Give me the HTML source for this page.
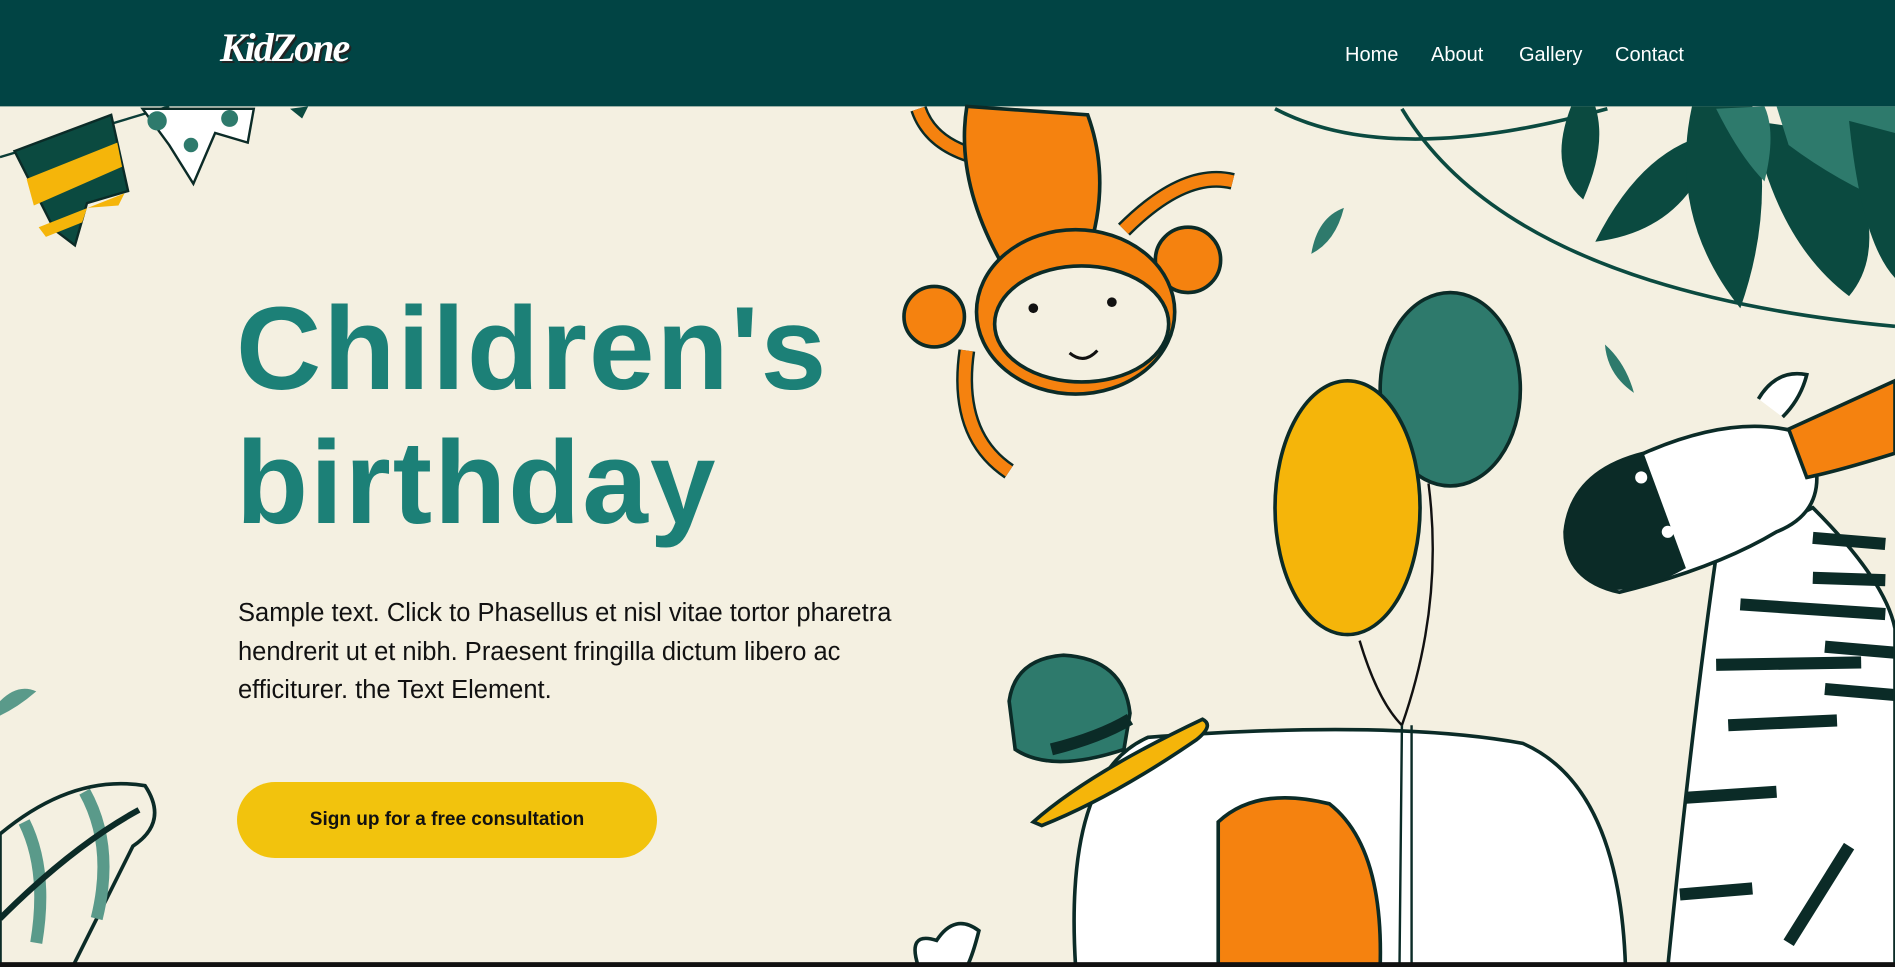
<!DOCTYPE html>
<html><head><meta charset="utf-8"><style>
html,body{margin:0;padding:0}
body{width:1895px;height:967px;overflow:hidden;position:relative;background:#f4f0e1;font-family:"Liberation Sans",sans-serif}
svg.bg{position:absolute;left:0;top:0;width:1895px;height:967px}
.logo{position:absolute;left:220px;top:24px;color:#fff;font-family:"Liberation Serif",serif;font-style:italic;font-weight:bold;font-size:40px;letter-spacing:-2px;text-shadow:2px 2px 0 #222}
nav{position:absolute;top:44px;left:1345px;font-size:20px;color:#fff}
nav span{position:absolute;white-space:nowrap}
h1{position:absolute;left:236px;top:282px;margin:0;font-size:118px;line-height:134px;color:#1c8077;font-weight:bold;letter-spacing:2px}
p{position:absolute;left:238px;top:594px;margin:0;width:675px;font-size:25.5px;line-height:38.5px;color:#111}
.btn{position:absolute;left:237px;top:782px;width:420px;height:76px;border-radius:38px;background:#f2c30d;font-size:19px;font-weight:bold;color:#111;text-align:center;line-height:76px}
</style></head><body>
<svg class="bg" viewBox="0 0 1568 800" preserveAspectRatio="none">
<rect x="0" y="0" width="1568" height="88" fill="#014444"/>
<path d="M0 130 L140 88" stroke="#0b3d37" stroke-width="2" fill="none"/>
<polygon points="12,125 92,95 106,158 72,168 62,203 45,190" fill="#0b4a40" stroke="#0b2b27" stroke-width="2"/>
<path d="M22 148 L97 118 L101 138 L28 170Z" fill="#f5b50a"/>
<path d="M32 188 L103 160 L98 170 L72 172 L68 184 L38 196Z" fill="#f5b50a"/>
<polygon points="118,90 210,90 205,118 178,110 160,152 140,120" fill="#fff" stroke="#0b2b27" stroke-width="2"/>
<circle cx="130" cy="100" r="8" fill="#2e7a6c"/><circle cx="158" cy="120" r="6" fill="#2e7a6c"/><circle cx="190" cy="98" r="7" fill="#2e7a6c"/>
<path d="M240 90 L250 98 L255 88Z" fill="#0b4a40"/>
<path d="M760 90 Q770 120 810 130" stroke="#0b2b27" stroke-width="14" fill="none"/>
<path d="M760 90 Q770 120 810 130" stroke="#f5820f" stroke-width="10" fill="none"/>
<path d="M800 88 Q790 150 830 220 L900 210 Q920 150 900 95 Z" fill="#f5820f" stroke="#0b2b27" stroke-width="3"/>
<path d="M930 190 Q980 140 1020 150" stroke="#0b2b27" stroke-width="14" fill="none"/>
<path d="M930 190 Q980 140 1020 150" stroke="#f5820f" stroke-width="10" fill="none"/>
<path d="M800 290 Q790 360 835 390" stroke="#0b2b27" stroke-width="14" fill="none"/>
<path d="M800 290 Q790 360 835 390" stroke="#f5820f" stroke-width="10" fill="none"/>
<circle cx="773" cy="262" r="25" fill="#f5820f" stroke="#0b2b27" stroke-width="3"/>
<circle cx="983" cy="215" r="27" fill="#f5820f" stroke="#0b2b27" stroke-width="3"/>
<ellipse cx="890" cy="258" rx="82" ry="68" fill="#f5820f" stroke="#0b2b27" stroke-width="3"/>
<ellipse cx="895" cy="268" rx="72" ry="48" fill="#f4f0e1" stroke="#0b2b27" stroke-width="3"/>
<circle cx="855" cy="255" r="4" fill="#111"/><circle cx="920" cy="250" r="4" fill="#111"/>
<path d="M885 292 Q897 302 908 290" stroke="#111" stroke-width="2.5" fill="none"/>
<path d="M1055 90 Q1150 140 1330 90" stroke="#0b4a40" stroke-width="3" fill="none"/>
<path d="M1160 90 Q1250 240 1568 270" stroke="#0b4a40" stroke-width="3" fill="none"/>
<path d="M1300 88 Q1280 140 1310 165 Q1330 120 1320 88Z" fill="#0b4a40"/>
<path d="M1320 200 Q1360 120 1420 110 Q1400 190 1320 200Z" fill="#0b4a40"/>
<path d="M1400 88 Q1380 180 1440 255 Q1470 170 1450 88Z" fill="#0b4a40"/>
<path d="M1450 100 Q1470 200 1530 245 Q1568 200 1520 110Z" fill="#0b4a40"/>
<path d="M1470 88 L1568 88 L1568 170 Q1520 150 1480 120Z" fill="#2e7a6c"/>
<path d="M1420 90 Q1440 130 1460 150 Q1470 110 1460 88Z" fill="#2e7a6c"/>
<path d="M1530 100 Q1540 200 1568 230 L1568 110Z" fill="#0b4a40"/>
<path d="M1085 210 Q1090 180 1112 172 Q1105 200 1085 210Z" fill="#2e7a6c"/>
<path d="M1328 285 Q1345 300 1352 325 Q1330 310 1328 285Z" fill="#2e7a6c"/>
<path d="M1182 400 Q1195 500 1160 600" stroke="#111" stroke-width="2" fill="none"/>
<path d="M1125 530 Q1140 580 1160 600" stroke="#111" stroke-width="2" fill="none"/>
<ellipse cx="1200" cy="322" rx="58" ry="80" fill="#2e7a6c" stroke="#0b2b27" stroke-width="3"/>
<ellipse cx="1115" cy="420" rx="60" ry="105" fill="#f5b50a" stroke="#0b2b27" stroke-width="3"/>
<path d="M890 800 Q880 640 950 610 Q1150 595 1260 615 Q1340 650 1345 800Z" fill="#fff" stroke="#0b2b27" stroke-width="3"/>
<path d="M1008 800 L1008 680 Q1040 650 1100 665 Q1145 700 1142 800Z" fill="#f5820f" stroke="#0b2b27" stroke-width="3"/>
<path d="M1160 600 L1158 800 M1168 600 L1168 800" stroke="#0b2b27" stroke-width="2"/>
<path d="M835 580 Q840 545 880 542 Q930 545 935 590 L930 620 Q870 640 840 620Z" fill="#2e7a6c" stroke="#0b2b27" stroke-width="3"/>
<path d="M855 680 Q900 640 995 595 Q1005 600 990 612 Q920 660 862 683Z" fill="#f5b50a" stroke="#0b2b27" stroke-width="3"/>
<path d="M870 620 Q910 610 935 595" stroke="#0b2b27" stroke-width="10" fill="none"/>
<path d="M1380 800 Q1400 600 1420 460 L1500 420 Q1560 480 1568 520 L1568 800Z" fill="#fff" stroke="#0b2b27" stroke-width="3"/>
<g stroke="#0b2b27" stroke-width="10" fill="none">
<path d="M1500 445 L1560 450"/><path d="M1500 478 L1560 480"/><path d="M1440 500 L1560 508"/><path d="M1510 535 L1568 540"/><path d="M1420 550 L1540 548"/><path d="M1510 570 L1568 575"/><path d="M1430 600 L1520 596"/><path d="M1395 660 L1470 655"/><path d="M1390 740 L1450 735"/><path d="M1480 780 L1530 700"/>
</g>
<path d="M1295 440 Q1300 390 1360 375 Q1440 340 1495 360 Q1520 420 1470 440 Q1420 470 1340 490 Q1295 480 1295 440Z" fill="#fff" stroke="#0b2b27" stroke-width="3"/>
<path d="M1295 440 Q1300 390 1360 375 L1395 470 Q1360 490 1330 488 Q1295 475 1295 440Z" fill="#0b2b27"/>
<circle cx="1358" cy="395" r="5" fill="#fff"/><circle cx="1380" cy="440" r="5" fill="#fff"/>
<path d="M1480 355 L1568 315 L1568 375 Q1520 390 1495 395Z" fill="#f5820f" stroke="#0b2b27" stroke-width="3"/>
<path d="M1455 330 Q1470 305 1495 310 Q1490 330 1475 345" fill="#fff" stroke="#0b2b27" stroke-width="3"/>
<path d="M0 690 Q60 640 120 650 Q140 680 110 700 Q80 760 60 800 L0 800Z" fill="#f4f0e1" stroke="#0b2b27" stroke-width="3"/>
<path d="M20 680 Q40 720 30 780 M70 655 Q95 700 80 760" stroke="#5a9a8a" stroke-width="10" fill="none"/>
<path d="M115 670 Q60 700 0 760" stroke="#0b2b27" stroke-width="5" fill="none"/>
<path d="M0 580 Q15 565 30 572 Q15 585 0 592Z" fill="#5a9a8a"/>
<path d="M760 800 Q750 770 775 778 Q790 755 810 770 Q805 790 800 800" fill="#fff" stroke="#0b2b27" stroke-width="3"/>
<rect x="0" y="796" width="1568" height="4" fill="#111"/>
</svg>
<div class="logo">KidZone</div>
<nav><span style="left:0">Home</span><span style="left:86px">About</span><span style="left:174px">Gallery</span><span style="left:270px">Contact</span></nav>
<h1>Children's<br>birthday</h1>
<p>Sample text. Click to Phasellus et nisl vitae tortor pharetra hendrerit ut et nibh. Praesent fringilla dictum libero ac efficiturer. the Text Element.</p>
<div class="btn">Sign up for a free consultation</div>
</body></html>
